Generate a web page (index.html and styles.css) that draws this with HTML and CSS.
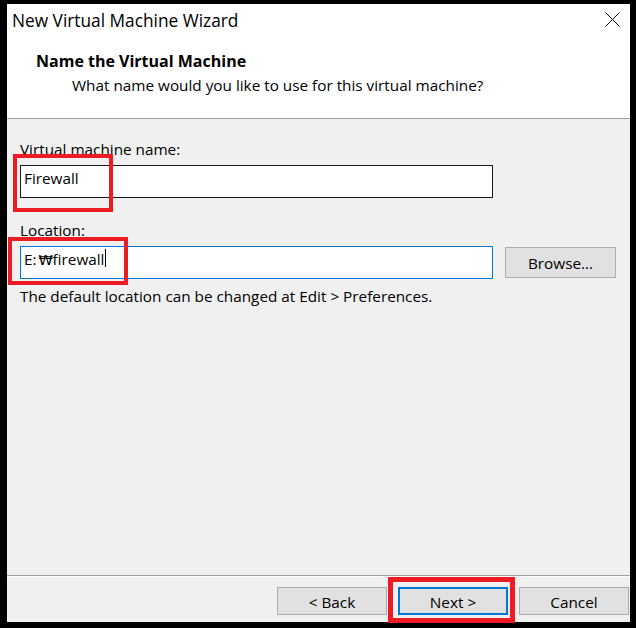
FILE: index.html
```html
<!DOCTYPE html>
<html>
<head>
<meta charset="utf-8">
<title>New Virtual Machine Wizard</title>
<link rel="stylesheet" href="styles.css">
</head>
<body>
<div class="page">
  <div class="window">
    <div class="header">
      <div class="titlebar">
        <span class="title">New Virtual Machine Wizard</span>
        <svg class="close" width="15" height="15" viewBox="0 0 15 15"><path d="M0.5 0.5 L14.5 14.5 M14.5 0.5 L0.5 14.5" stroke="#000" stroke-width="1" fill="none"/></svg>
      </div>
      <div class="head-title">Name the Virtual Machine</div>
      <div class="head-sub">What name would you like to use for this virtual machine?</div>
    </div>
    <div class="content">
      <div class="label">Virtual machine name:</div>
      <div class="textbox">Firewall</div>
      <div class="label label-loc">Location:</div>
      <div class="row">
        <div class="textbox focused">E:<span class="won">₩</span>firewall<span class="caret"></span></div>
        <div class="btn browse">Browse...</div>
      </div>
      <div class="note">The default location can be changed at Edit &gt; Preferences.</div>
    </div>
    <div class="footer">
      <div class="btn">&lt; Back</div>
      <div class="btn default">Next &gt;</div>
      <div class="btn">Cancel</div>
    </div>
  </div>
  <div class="mark mark-name"></div>
  <div class="mark mark-loc"></div>
  <div class="mark mark-next"></div>
</div>
</body>
</html>
```

FILE: styles.css
```css
* { box-sizing: border-box; }
html, body { margin: 0; padding: 0; background: #000; }
body {
  width: 636px;
  height: 628px;
  overflow: hidden;
  font-family: "Open Sans", "Noto Sans", "Noto Sans CJK KR", sans-serif;
  font-size: 15.3px;
  color: #000;
}
.page {
  position: relative;
  width: 636px;
  height: 628px;
  padding: 4px 6px 6px 7px;
}
.window {
  display: flex;
  flex-direction: column;
  height: 618px;
  background: #f0f0f0;
}
.header {
  background: #fff;
  border-bottom: 1px solid #a0a0a0;
  padding-bottom: 21px;
}
.titlebar {
  display: flex;
  height: 34px;
  padding-left: 5px;
}
.title {
  font-size: 17.3px;
  line-height: 34px;
}
.close {
  margin-left: auto;
  margin-right: 10px;
  margin-top: 8px;
}
.head-title {
  font-weight: 700;
  font-size: 16px;
  line-height: 23px;
  margin-top: 12px;
  padding-left: 29px;
}
.head-sub {
  line-height: 23px;
  margin-top: 1px;
  padding-left: 65px;
}
.content {
  flex: 1;
  padding: 19px 0 0 13px;
}
.label { line-height: 23px; }
.label-loc { margin-top: 21px; }
.textbox {
  width: 473px;
  height: 33px;
  margin-top: 4px;
  border: 1px solid #1a1a1a;
  background: #fff;
  padding: 1px 3px 0;
  line-height: 23px;
  white-space: nowrap;
}
.row {
  display: flex;
  align-items: center;
  margin-top: 4px;
}
.row .textbox { margin-top: 0; }
.focused { border-color: #0078d7; }
.won {
  display: inline-block;
  width: 14px;
  margin-left: 2px;
  text-align: center;
  font-family: "DejaVu Sans", "Noto Sans CJK KR", sans-serif;
  font-size: 14.5px;
}
.caret {
  display: inline-block;
  width: 1px;
  height: 18px;
  margin-left: 1px;
  background: #000;
  vertical-align: -2px;
}
.btn {
  display: flex;
  align-items: center;
  justify-content: center;
  background: #e1e1e1;
  border: 1px solid #adadad;
  white-space: nowrap;
}
.browse {
  width: 111px;
  height: 31px;
  margin-left: 12px;
}
.note {
  line-height: 23px;
  margin-top: 6px;
}
.footer {
  height: 47px;
  border-top: 1px solid #a0a0a0;
  box-shadow: inset 0 1px #fff;
  display: flex;
  justify-content: flex-end;
  align-items: flex-start;
  gap: 11px;
  padding: 11px 1px 0 0;
}
.footer .btn {
  width: 110px;
  height: 28px;
  padding-top: 2px;
}
.footer .default { border: 2px solid #0078d7; }
.mark {
  position: absolute;
  border: 4px solid #ed1c24;
}
.mark-name { left: 13px; top: 154px; width: 100px; height: 58px; }
.mark-loc { left: 8px; top: 237px; width: 120px; height: 48px; }
.mark-next { left: 388px; top: 577px; width: 127px; height: 46px; border-width: 5px; }
```
